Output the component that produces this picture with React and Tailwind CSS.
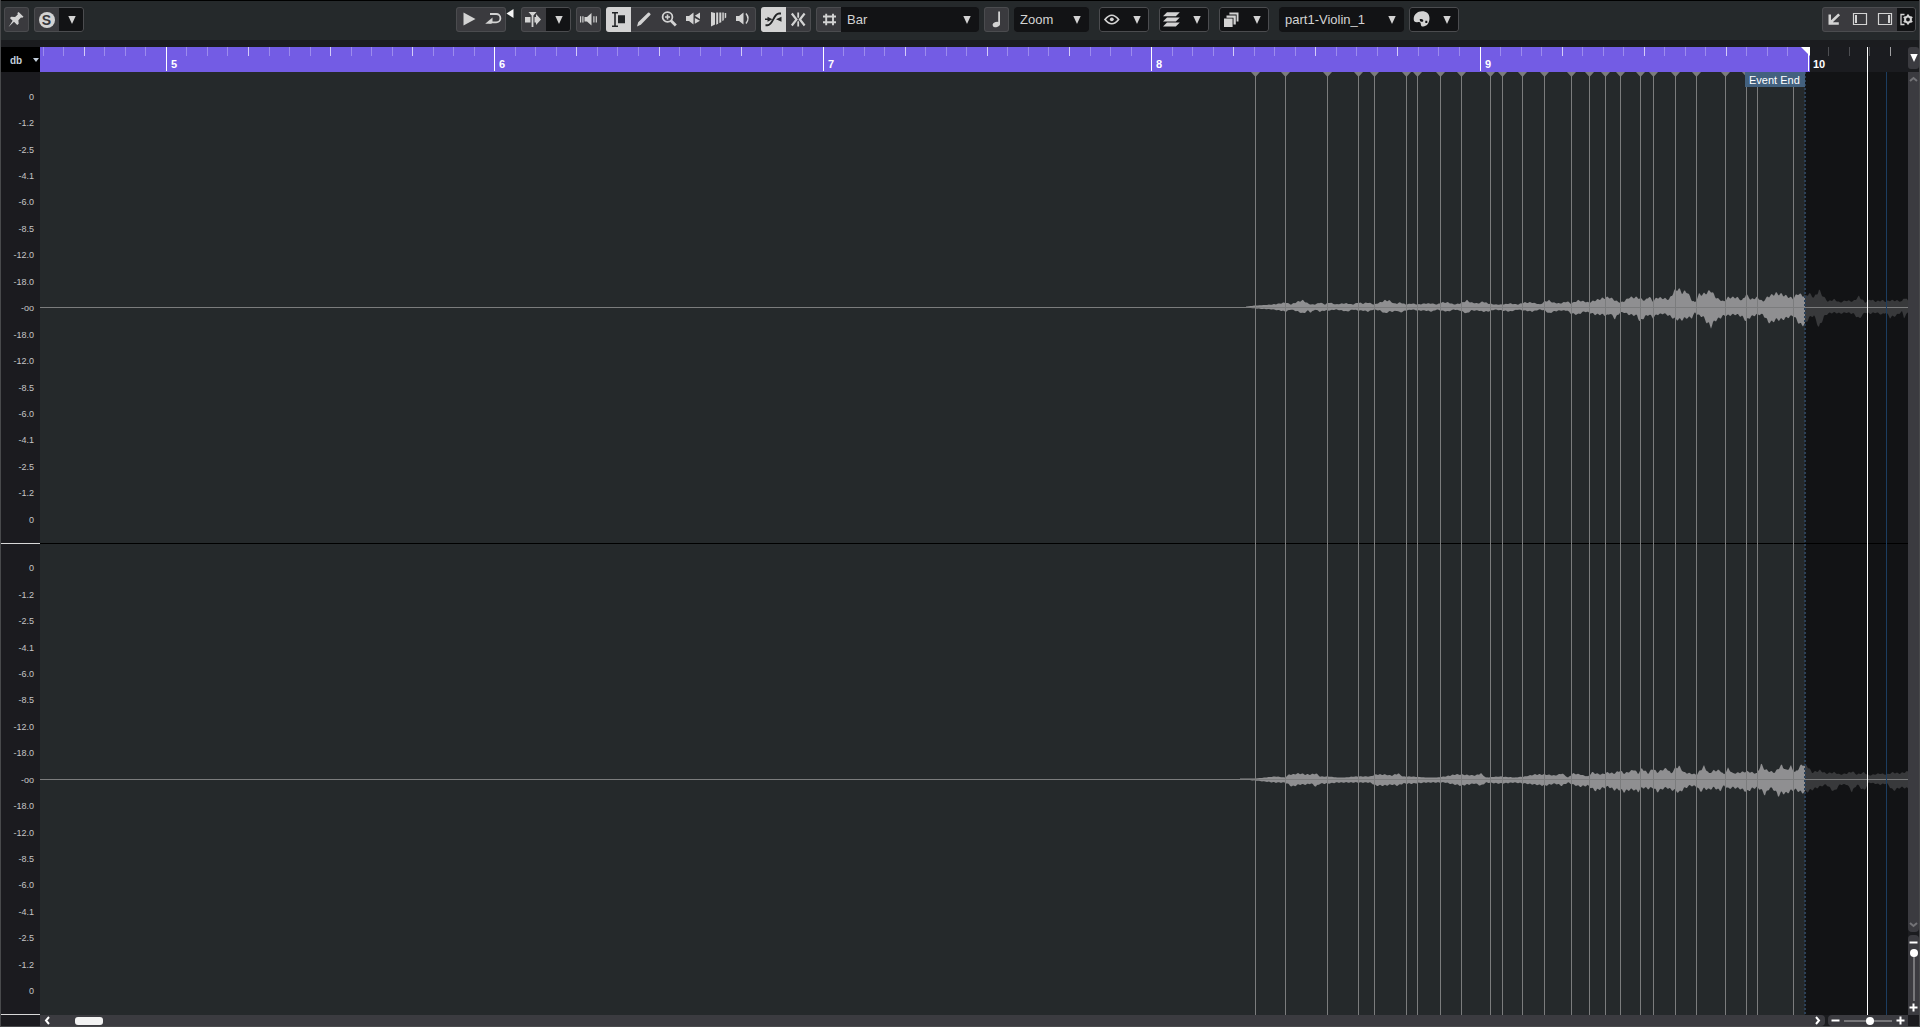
import { useState } from 'react';
import clsx from 'clsx';

// Horizontal positions are in timeline pixels, counted from the left edge of the wave display.
const BAR_WIDTH = 328.4;
const FIRST_BAR_X = 126.4;
const EVENT_END = 1765;
const VIEW_END = 1868;

const DB_SCALE = [
  '0', '-1.2', '-2.5', '-4.1', '-6.0', '-8.5', '-12.0', '-18.0', '-oo',
  '-18.0', '-12.0', '-8.5', '-6.0', '-4.1', '-2.5', '-1.2', '0',
];

const HITPOINTS = [
  1215, 1245, 1287, 1318, 1334, 1366, 1377, 1400, 1421, 1450, 1462, 1482, 1504,
  1531, 1549, 1565, 1580, 1600, 1613, 1635, 1656, 1685, 1706, 1717, 1753,
];

// [x, level above the zero line, level below the zero line]
const LEFT_PEAKS = [
  [1206, 0, 0], [1216, 1, 1], [1233, 2, 2], [1240, 3, 3], [1246, 4, 4], [1251, 2, 2],
  [1258, 5, 4], [1263, 6, 6], [1268, 3, 3], [1271, 2, 5], [1275, 2, 2], [1280, 4, 4],
  [1285, 2, 3], [1289, 4, 3], [1296, 2, 2], [1302, 3, 3], [1307, 3, 4], [1313, 2, 2],
  [1318, 4, 3], [1323, 3, 3], [1328, 4, 4], [1334, 2, 2], [1340, 4, 3], [1345, 6, 6],
  [1349, 6, 4], [1354, 3, 4], [1357, 3, 3], [1360, 4, 5], [1366, 2, 3], [1372, 3, 2],
  [1378, 2, 3], [1385, 3, 3], [1392, 3, 4], [1397, 2, 2], [1401, 4, 3], [1408, 4, 4],
  [1414, 2, 2], [1420, 3, 3], [1427, 6, 6], [1431, 4, 3], [1438, 3, 3], [1443, 5, 4],
  [1448, 3, 4], [1455, 2, 2], [1462, 2, 3], [1470, 3, 4], [1478, 2, 2], [1484, 4, 3],
  [1492, 4, 4], [1500, 2, 2], [1505, 5, 3], [1509, 6, 6], [1513, 4, 4], [1520, 3, 3],
  [1527, 5, 3], [1531, 3, 6], [1538, 6, 7], [1544, 5, 4], [1549, 4, 5], [1555, 6, 7],
  [1562, 8, 7], [1567, 9, 8], [1570, 9, 6], [1575, 6, 11], [1580, 4, 5], [1584, 5, 5],
  [1589, 9, 7], [1597, 9, 8], [1600, 8, 14], [1605, 6, 9], [1609, 10, 7], [1613, 5, 10],
  [1617, 9, 7], [1624, 8, 6], [1629, 7, 8], [1634, 15, 11], [1638, 18, 12], [1642, 14, 12],
  [1647, 15, 10], [1652, 6, 10], [1655, 4, 5], [1659, 12, 8], [1663, 12, 9], [1667, 14, 15],
  [1671, 16, 19], [1675, 10, 13], [1679, 7, 11], [1684, 5, 8], [1688, 9, 8], [1693, 9, 7],
  [1697, 9, 7], [1702, 6, 9], [1706, 12, 13], [1711, 7, 9], [1717, 9, 7], [1723, 5, 7],
  [1728, 10, 14], [1731, 11, 15], [1736, 13, 12], [1742, 12, 12], [1750, 9, 9], [1753, 8, 8],
  [1758, 13, 14], [1760, 12, 17], [1765, 10, 17], [1769, 13, 10], [1774, 9, 8], [1779, 16, 20],
  [1784, 9, 9], [1788, 5, 6], [1794, 7, 5], [1800, 4, 6], [1806, 6, 5], [1813, 5, 6],
  [1819, 10, 11], [1825, 4, 5], [1830, 7, 6], [1836, 5, 5], [1842, 6, 7], [1846, 5, 5],
  [1850, 6, 10], [1856, 6, 8], [1862, 5, 4], [1864, 9, 10], [1868, 6, 5],
];

const RIGHT_PEAKS = [
  [1200, 0, 0], [1215, 0, 1], [1225, 1, 2], [1235, 2, 3], [1245, 1, 3], [1249, 4, 5],
  [1252, 4, 7], [1259, 5, 5], [1266, 4, 5], [1271, 4, 4], [1276, 5, 7], [1280, 2, 4],
  [1288, 2, 4], [1297, 1, 3], [1305, 1, 3], [1314, 2, 3], [1322, 2, 3], [1330, 2, 3],
  [1336, 4, 6], [1344, 4, 6], [1352, 3, 5], [1358, 5, 6], [1363, 2, 4], [1372, 2, 4],
  [1385, 1, 3], [1397, 1, 3], [1405, 2, 3], [1415, 4, 5], [1421, 4, 6], [1435, 3, 4],
  [1441, 5, 6], [1446, 1, 3], [1460, 2, 4], [1475, 1, 3], [1485, 2, 4], [1495, 4, 5],
  [1505, 4, 6], [1515, 3, 4], [1522, 5, 6], [1528, 1, 3], [1533, 5, 5], [1540, 4, 7],
  [1548, 2, 6], [1552, 6, 9], [1556, 5, 11], [1561, 4, 9], [1568, 6, 7], [1574, 5, 10],
  [1580, 8, 10], [1584, 5, 12], [1590, 7, 10], [1594, 9, 10], [1598, 5, 12], [1602, 10, 8],
  [1608, 5, 9], [1613, 10, 8], [1617, 6, 12], [1623, 9, 9], [1627, 10, 8], [1631, 5, 10],
  [1636, 11, 11], [1639, 12, 13], [1644, 6, 9], [1650, 5, 6], [1657, 4, 7], [1660, 8, 12],
  [1664, 12, 9], [1669, 5, 10], [1674, 8, 8], [1680, 8, 11], [1684, 4, 6], [1688, 10, 9],
  [1693, 5, 8], [1700, 6, 9], [1707, 7, 12], [1712, 6, 9], [1717, 5, 8], [1721, 14, 10],
  [1725, 9, 15], [1730, 7, 8], [1735, 6, 11], [1738, 10, 16], [1742, 13, 13], [1746, 8, 14],
  [1751, 12, 11], [1755, 6, 10], [1762, 14, 13], [1767, 13, 12], [1772, 6, 10], [1780, 8, 7],
  [1786, 5, 5], [1794, 6, 12], [1800, 4, 5], [1807, 5, 5], [1812, 7, 12], [1817, 4, 5],
  [1824, 6, 11], [1829, 3, 3], [1840, 5, 5], [1847, 4, 4], [1853, 6, 11], [1860, 5, 8],
  [1864, 6, 8], [1868, 7, 9],
];

// Fills in the levels between the stored peaks and adds the small ripple of the samples.
function wavePath(peaks, from, to) {
  const top = [];
  const bottom = [];
  let i = 0;
  for (let x = Math.max(from, peaks[0][0]); x <= to; x++) {
    while (i < peaks.length - 2 && peaks[i + 1][0] < x) i++;
    const [x0, up0, down0] = peaks[i];
    const [x1, up1, down1] = peaks[i + 1];
    const t = Math.min(1, (x - x0) / (x1 - x0));
    const up = up0 + (up1 - up0) * t;
    const down = down0 + (down1 - down0) * t;
    const ripple = Math.sin(x * 1.3) * 0.12;
    top.push(`${x},${(-up * (1 + ripple)).toFixed(1)}`);
    bottom.unshift(`${x},${(down * (1 - ripple) + 1).toFixed(1)}`);
  }
  return `M${top.join('L')}L${bottom.join('L')}Z`;
}

function Icon({ children, className }) {
  return (
    <svg viewBox="0 0 25 25" className={clsx('size-[25px] shrink-0', className)} fill="currentColor" aria-hidden="true">
      {children}
    </svg>
  );
}

function Arrow({ className }) {
  return (
    <svg viewBox="0 0 8 8" className={clsx('size-2 shrink-0', className)} fill="currentColor" aria-hidden="true">
      <path d="M.3 0h7.400L4 8z" />
    </svg>
  );
}

function Group({ children, className }) {
  return (
    <div className={clsx('flex h-[25px] overflow-hidden rounded-[3px] bg-[#3a3a3e] outline-1 -outline-offset-1 outline-[#4b4c4f]', className)}>
      {children}
    </div>
  );
}

function ToolButton({ label, active, children }) {
  return (
    <button
      type="button"
      aria-label={label}
      aria-pressed={active}
      className={clsx('flex size-[25px] shrink-0 items-center justify-center', active && 'relative z-10 bg-[#d3d3d3] text-[#222426]')}
    >
      {children}
    </button>
  );
}

function MenuArrow({ label }) {
  return (
    <button type="button" aria-label={label} className="flex size-[25px] items-center justify-center bg-[#121315]">
      <Arrow />
    </button>
  );
}

function IconMenu({ label, children }) {
  return (
    <Group>
      <button type="button" aria-label={label} className="flex w-[50px] items-center justify-between bg-[#121315] pr-2">
        {children}
        <Arrow />
      </button>
    </Group>
  );
}

function Dropdown({ label, options, className }) {
  return (
    <div className={clsx('relative bg-[#121315]', className)}>
      <select aria-label={label} className="h-full w-full appearance-none pl-1.5 text-[13px] text-[#d4d4d4] outline-none">
        {options.map((option) => (
          <option key={option}>{option}</option>
        ))}
      </select>
      <Arrow className="pointer-events-none absolute top-[9px] right-2" />
    </div>
  );
}

function Toolbar() {
  return (
    <header className="grid h-10 shrink-0 grid-cols-[1fr_auto_1fr] border-t border-black bg-[#25292b] px-[3px] pt-1.5 text-[#d3d3d3]">
      <div className="flex gap-[5px]">
        <Group>
          <ToolButton label="Pin editor">
            <Icon>
              <path d="M14.6 5l4.9 4.8-1.2 1-1.3-.3-2.6 2.7.3 3.5-1.5 1.3-3.2-3.2L4.6 20l4-6.2L5.9 11l1.4-1.2 3.8.3 2.7-2.7-.4-1.3z" />
            </Icon>
          </ToolButton>
        </Group>
        <Group>
          <ToolButton label="Solo editor">
            <span className="flex size-4 items-center justify-center rounded-full bg-[#d3d3d3] text-sm font-bold text-[#37373b]">S</span>
          </ToolButton>
          <MenuArrow label="Solo options" />
        </Group>
      </div>

      <div className="mr-[5px] flex">
        <Group>
          <ToolButton label="Play">
            <Icon><path d="M7.5 5.5L19.5 12 7.5 18.5z" /></Icon>
          </ToolButton>
          <ToolButton label="Loop">
            <Icon>
              <path d="M9 7h6.200a4.200 4.200 0 0 1 0 8.400H8" fill="none" stroke="currentColor" strokeWidth="1.800" />
              <path d="M4.200 16.800l7.300-6.300v3.800l-1 2.500z" />
            </Icon>
          </ToolButton>
        </Group>
        <svg viewBox="0 0 15 25" className="h-[25px] w-[15px]" fill="#f4f4f4" aria-hidden="true">
          <path d="M.5 6.500l7-4.500v9z" />
        </svg>

        <div className="flex gap-[5px]">
          <Group>
            <ToolButton label="Auto-scroll">
              <Icon>
                <path d="M4 10h5.500v5.500H4zM13.500 10H15V7l5 5.500-5 5.500v-2.500h-1.500zM7.500 5h8L12.400 8.500V20h-1.800V8.500z" />
              </Icon>
            </ToolButton>
            <MenuArrow label="Auto-scroll options" />
          </Group>
          <Group>
            <ToolButton label="Audition">
              <Icon>
                <path d="M8.500 10h2.500l4.500-4v12.500L11 14.500H8.500zM4 9.200h1.200v6.300H4zM6.300 9.200h1.200v6.300H6.300zM17.300 9.200h1.200v6.300h-1.200zM19.700 9.200h1.200v6.300h-1.200z" />
              </Icon>
            </ToolButton>
          </Group>
          <Group>
            <ToolButton label="Range selection" active>
              <Icon>
                <path d="M12 8.200h7v8h-7z" />
                <path d="M6 5.700h2.200l.8.700.8-.7H12M6 19.300h2.200l.8-.7.8.7H12M9 6v13" fill="none" stroke="currentColor" strokeWidth="1.600" />
              </Icon>
            </ToolButton>
            <ToolButton label="Draw">
              <Icon><path d="M6 19.500l1.200-4.300L17 5.800a1 1 0 0 1 1.400 0l.9.900a1 1 0 0 1 0 1.400L9.800 17.800z" /></Icon>
            </ToolButton>
            <ToolButton label="Zoom">
              <Icon>
                <circle cx="11.500" cy="10" r="4.900" fill="none" stroke="currentColor" strokeWidth="1.800" />
                <path d="M10.700 7.500h1.600v1.700H14v1.600h-1.700v1.700h-1.600v-1.700H9V9.200h1.700z" />
                <path d="M14.800 13.500l5 5" stroke="currentColor" strokeWidth="2.800" />
              </Icon>
            </ToolButton>
            <ToolButton label="Scrub mute">
              <Icon>
                <path d="M5 9h3l4.500-3.500v12L8 14H5zM19 5.500v6.500L13.800 8.800zM13.800 11l5.200 2.800-5.200 3z" />
              </Icon>
            </ToolButton>
            <ToolButton label="Scrub">
              <Icon>
                <path d="M5 5l4 1v11.500L5 19.500zM10.200 5.500h2v11.300l-2 .9zM13.300 5.500h2v9.700l-2 .9zM16.300 5.500h1.500v7.700l-1.500.9zM18.700 6h1.500v4.500l-1.500.9z" />
              </Icon>
            </ToolButton>
            <ToolButton label="Play tool">
              <Icon>
                <path d="M5 9h3l4.500-3.500v12L8 14H5z" />
                <path d="M15 6.500q4 5 0 10" fill="none" stroke="currentColor" strokeWidth="1.500" />
              </Icon>
            </ToolButton>
          </Group>
          <Group>
            <ToolButton label="Snap to zero crossing" active>
              <Icon>
                <path d="M4.500 18.200h2c5.500 0 6-11.700 11.500-11.700h2" fill="none" stroke="currentColor" strokeWidth="1.900" />
                <path d="M4 11.600h2.500V9.800l5 2.500-5 2.500V13H4zM20.500 11.600V9.800l-5.500 2.500 5.500 2.500z" />
              </Icon>
            </ToolButton>
            <ToolButton label="Snap">
              <Icon>
                <path d="M11.300 5.500h1.800v4.500l-.9 1.500-.9-1.500zM11.300 19.500h1.800V15l-.9-1.500-.9 1.500z" />
                <path d="M5.800 6.500l4.700 6-4.700 6M18.600 6.500l-4.700 6 4.700 6" fill="none" stroke="currentColor" strokeWidth="2.200" />
              </Icon>
            </ToolButton>
          </Group>
          <Group>
            <ToolButton label="Grid">
              <Icon>
                <path d="M10.200 6.800v11.400M17 6.800v11.400M7 9.500h13M7 15.300h13" fill="none" stroke="currentColor" strokeWidth="1.900" />
              </Icon>
            </ToolButton>
            <Dropdown label="Grid type" options={['Bar', 'Beat', 'Quantize']} className="w-[138px]" />
          </Group>
          <Group>
            <ToolButton label="Musical mode">
              <Icon>
                <ellipse cx="12.300" cy="17.500" rx="3.700" ry="2.600" transform="rotate(-18 12.300 17.500)" />
                <path d="M14.200 4.500H16V17.500h-1.800z" />
              </Icon>
            </ToolButton>
          </Group>
          <Group>
            <Dropdown label="Quantize preset" options={['Zoom', '1/4', '1/8', '1/16']} className="w-[75px]" />
          </Group>
        </div>

        <div className="ml-2.5 flex gap-2.5">
          <IconMenu label="View">
            <Icon>
              <path d="M6 12.500q6.800-8.500 13.600 0-6.800 8.500-13.600 0z" fill="none" stroke="currentColor" strokeWidth="1.700" />
              <circle cx="12.800" cy="12.300" r="1.900" />
            </Icon>
          </IconMenu>
          <IconMenu label="Layers">
            <Icon>
              <path d="M8 5.300h12.800l-4 4H4zM8 10.400h12.800l-4 4H4zM8 15.500h12.800l-4 4H4z" />
            </Icon>
          </IconMenu>
          <IconMenu label="Stack">
            <Icon>
              <path d="M5 11.500h8.600V20H5zM7.500 8.400h9.300v9h-2.300v-6.700h-7zM10.400 5.400h9.100v9h-1.900V7.600h-7.200z" />
            </Icon>
          </IconMenu>
          <div className="flex gap-[5px]">
            <Group>
              <Dropdown label="Event" options={['part1-Violin_1']} className="w-[125px]" />
            </Group>
            <IconMenu label="Colors">
              <Icon>
                <path fillRule="evenodd" d="M13 4.300c4.500 0 7.500 2.600 7.500 7 0 4.900-2.900 8.200-6.300 8.200-1.700 0-2.400-1-2.400-2.600 0-1.600-1-2.300-2.600-1.900-2.700.7-4.500-.3-4.500-3C4.700 7.500 8.500 4.300 13 4.300zM10.700 12.500c0 1.500 1 2.300 2.200 2.300s1.700-1 1.200-1.800c-.5-.9-3.400-1.500-3.400-.5zM16.300 13.800v2.200h2v-2.200z" />
              </Icon>
            </IconMenu>
          </div>
        </div>
      </div>

      <Group className="justify-self-end">
        <ToolButton label="Open in separate window">
          <Icon>
            <path d="M6.500 7.500h2.500v5.800l7.200-6.900 1.900 1.900-7.300 6.900h6v2.500H6.500z" />
          </Icon>
        </ToolButton>
        <ToolButton label="Left zone">
          <Icon>
            <path d="M6.500 6.500h13v11h-13z" fill="none" stroke="currentColor" strokeWidth="1.200" />
            <path d="M8 8h2v8H8z" />
          </Icon>
        </ToolButton>
        <ToolButton label="Right zone">
          <Icon>
            <path d="M6.500 6.500h13v11h-13z" fill="none" stroke="currentColor" strokeWidth="1.200" />
            <path d="M16 8h2v8h-2z" />
          </Icon>
        </ToolButton>
        <button type="button" aria-label="Layout settings" className="w-[19px] bg-[#121315]">
          <svg viewBox="0 0 19 25" className="h-[25px] w-[19px]" fill="none" stroke="currentColor" aria-hidden="true">
            <path d="M7.500 7.500H4v10h3.500" strokeWidth="1.300" />
            <circle cx="11" cy="12.500" r="2.900" strokeWidth="2" />
            <path d="M11 7.500v2M11 15.500v2M6.700 10l1.700 1M13.600 14l1.700 1M6.700 15l1.700-1M13.600 11l1.700-1" strokeWidth="2" />
          </svg>
        </button>
      </Group>
    </header>
  );
}

function Ruler() {
  const ticks = [];
  for (let k = -6; k <= 84; k++) {
    const x = Math.floor(FIRST_BAR_X + (k * BAR_WIDTH) / 16);
    ticks.push({ x, k, past: x > 1770, bar: k % 16 === 0, beat: k % 4 === 0 });
  }

  return (
    <div className="overflow-hidden bg-[#1b1c20]">
      <svg className="h-full w-full" shapeRendering="crispEdges">
        <rect width="1770" height="100%" fill="#735ce4" />
        {ticks.map(({ x, k, past, bar, beat }) => (
          <rect
            key={k}
            x={x}
            width="1"
            height={bar ? 24 : 9}
            fill={bar ? '#ffffff' : past ? (beat ? '#a0a0a2' : '#4d4e52') : beat ? '#d5cdf8' : '#9c8bed'}
          />
        ))}
        {[5, 6, 7, 8, 9, 10].map((bar, i) => (
          <text
            key={bar}
            x={Math.floor(FIRST_BAR_X + i * BAR_WIDTH) + 5}
            y="21"
            className="fill-white font-bold text-[11px]"
          >
            {bar}
          </text>
        ))}
        <path d="M1761 0h9v9z" fill="#ffffff" shapeRendering="auto" />
        <rect x="1827" width="1" height="100%" fill="#ffffff" />
      </svg>
    </div>
  );
}

function Lane({ peaks }) {
  return (
    <svg className="min-h-0 w-full flex-1 border-b border-black last:border-b-0">
      <svg y="50%" overflow="visible">
        <g transform="translate(0 -1)">
          <path d={wavePath(peaks, 0, EVENT_END)} fill="#8f8f91" />
          <path d={wavePath(peaks, EVENT_END, VIEW_END)} fill="#38393b" />
          <rect width="100%" height="1" fill="#7b7c7d" shapeRendering="crispEdges" />
        </g>
      </svg>
    </svg>
  );
}

function WaveDisplay() {
  return (
    <main className="relative flex min-h-0 flex-col overflow-hidden bg-[#25292b]">
      <div className="absolute inset-y-0 right-0 left-[1765px] bg-[#121315]" />
      <div className="relative flex min-h-0 flex-1 flex-col">
        <Lane peaks={LEFT_PEAKS} />
        <Lane peaks={RIGHT_PEAKS} />
      </div>
      <svg className="absolute inset-0 h-full w-full" shapeRendering="crispEdges">
        {HITPOINTS.map((x) => (
          <g key={x} fill="#7b7c7d">
            <rect x={x} width="1" height="100%" />
            <path d={`M${x - 4} 0h9l-4.500 5z`} shapeRendering="auto" />
          </g>
        ))}
        <line x1="1765" x2="1765" y1="0" y2="100%" stroke="#2c4158" strokeWidth="2" strokeDasharray="2 2" />
        <rect x="1827" width="1" height="100%" fill="#ffffff" />
        <rect x="1846" width="1" height="100%" fill="#1c3d60" />
      </svg>
      <span className="absolute top-0 left-[1705px] h-[15px] w-[60px] bg-[#43617f] pl-1 text-[11px]/[16px] text-white">
        Event End
      </span>
    </main>
  );
}

function LevelScale() {
  return (
    <div className="flex min-h-0 flex-col bg-[#1b1b1f] text-[9px] text-[#c6c6c6]">
      {['left', 'right'].map((channel) => (
        <div key={channel} className="flex flex-1 flex-col border-b border-[#d8d8d8] pt-3 pr-1.5 pb-[9px]">
          {DB_SCALE.map((level, i) => (
            <span key={i} className="flex flex-1 items-center justify-end leading-none">{level}</span>
          ))}
        </div>
      ))}
    </div>
  );
}

function Glyph({ d, className }) {
  return (
    <svg viewBox="0 0 9 9" className={clsx('size-[9px]', className)} fill="none" stroke="currentColor" strokeWidth="2" aria-hidden="true">
      <path d={d} />
    </svg>
  );
}

function HorizontalBar() {
  const [zoom, setZoom] = useState(54);

  return (
    <footer className="flex text-white">
      <div className="flex flex-1 items-center justify-between rounded-r-sm bg-[#3b3b40] px-[3px]">
        <div className="flex items-center gap-[23px]">
          <button type="button" aria-label="Scroll left"><Glyph d="M6 1L3 4.500 6 8" /></button>
          <div className="h-2 w-7 rounded-[3px] bg-[#f2f2f2]" />
        </div>
        <button type="button" aria-label="Scroll right"><Glyph d="M3 1l3 3.500L3 8" /></button>
      </div>
      <div className="ml-[3px] flex w-20 items-center justify-center gap-1 rounded-l-sm bg-[#3b3b40]">
        <button type="button" aria-label="Zoom out"><Glyph d="M.5 4.500h8" /></button>
        <input
          type="range"
          aria-label="Horizontal zoom"
          value={zoom}
          onChange={(e) => setZoom(Number(e.target.value))}
          className="h-2 w-12 appearance-none bg-[linear-gradient(#77777a,#77777a)] bg-[length:100%_2px] bg-center bg-no-repeat [&::-webkit-slider-thumb]:size-2 [&::-webkit-slider-thumb]:appearance-none [&::-webkit-slider-thumb]:rounded-full [&::-webkit-slider-thumb]:bg-white"
        />
        <button type="button" aria-label="Zoom in"><Glyph d="M.5 4.500h8M4.500 .5v8" /></button>
      </div>
    </footer>
  );
}

function VerticalBar() {
  const [zoom, setZoom] = useState(0);

  return (
    <aside className="flex min-h-0 flex-col gap-[3px] text-white">
      <div className="flex flex-1 flex-col items-center justify-between rounded-b-sm bg-[#3b3b40] py-[3px] text-[#737377]">
        <button type="button" aria-label="Scroll up"><Glyph d="M1 6l3.500-3L8 6" /></button>
        <button type="button" aria-label="Scroll down"><Glyph d="M1 3l3.500 3L8 3" /></button>
      </div>
      <div className="flex h-20 flex-col items-center justify-center gap-0.5 rounded-t-sm bg-[#3b3b40]">
        <button type="button" aria-label="Zoom out vertically"><Glyph d="M.5 4.500h8" /></button>
        <input
          type="range"
          aria-label="Vertical zoom"
          value={zoom}
          onChange={(e) => setZoom(Number(e.target.value))}
          className="h-[52px] w-2 appearance-none bg-[linear-gradient(#77777a,#77777a)] bg-[length:2px_100%] bg-center bg-no-repeat [writing-mode:vertical-lr] [&::-webkit-slider-thumb]:size-2 [&::-webkit-slider-thumb]:appearance-none [&::-webkit-slider-thumb]:rounded-full [&::-webkit-slider-thumb]:bg-white"
        />
        <button type="button" aria-label="Zoom in vertically"><Glyph d="M.5 4.500h8M4.500 .5v8" /></button>
      </div>
    </aside>
  );
}

/**
 * App component — sample editor window with toolbar, ruler and a stereo wave display.
 *
 * @returns {JSX.Element}
 */
export default function App() {
  return (
    <div className="flex h-screen flex-col overflow-hidden border-x border-b border-[#48494b] bg-[#1b1c1f] font-['Liberation_Sans',Arial,sans-serif] [&_button]:flex [&_button]:items-center">
      <Toolbar />
      <div className="mt-[7px] grid min-h-0 flex-1 grid-cols-[39px_minmax(0,1fr)_11px] grid-rows-[25px_minmax(0,1fr)_11px]">
        <div className="relative bg-black text-[#c3cfdc]">
          <select aria-label="Level unit" className="h-full w-full appearance-none pl-[9px] text-[10px] font-bold outline-none">
            <option>db</option>
            <option>%</option>
          </select>
          <svg viewBox="0 0 6 4" className="pointer-events-none absolute top-[11px] right-px h-1 w-1.5" fill="currentColor" aria-hidden="true">
            <path d="M0 0h6L3 4z" />
          </svg>
        </div>
        <Ruler />
        <button type="button" aria-label="Ruler format" className="mb-[3px] justify-center rounded-[3px] bg-[#3b3b40] text-white">
          <Arrow />
        </button>
        <LevelScale />
        <WaveDisplay />
        <VerticalBar />
        <div className="rounded-bl-lg bg-[#1b1b1f]" />
        <HorizontalBar />
        <div className="rounded-br-lg bg-[#1b1b1f]" />
      </div>
    </div>
  );
}
